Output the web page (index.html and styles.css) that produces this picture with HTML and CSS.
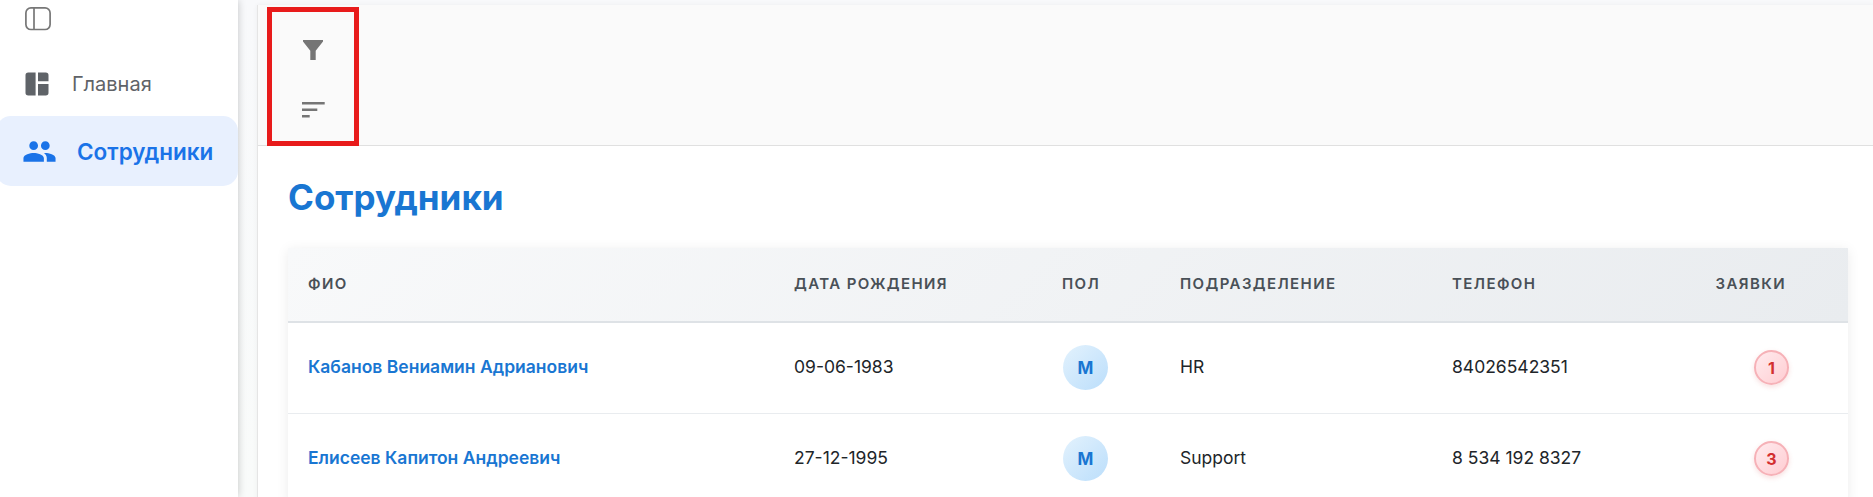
FILE: index.html
```html
<!DOCTYPE html>
<html lang="ru">
<head>
<meta charset="utf-8">
<title>Сотрудники</title>
<link rel="stylesheet" href="styles.css">
</head>
<body>
<div class="app">
  <aside class="sidebar">
    <button class="toggle" aria-label="Меню">
      <svg width="26" height="24" viewBox="0 0 26 24" fill="none" stroke="#777"><rect x=".9" y=".9" width="24.2" height="21.6" rx="5" stroke-width="1.7"/><path d="M9 1v21.5" stroke-width="1.7"/></svg>
    </button>
    <nav class="nav">
      <a class="nav-item">
        <svg class="home-icon" width="24" height="24" viewBox="0 0 24 24" fill="#5f6368"><path d="M3.2.5H10.6V23.5H3.2A2.7 2.7 0 0 1 .5 20.800V3.200A2.700 2.700 0 0 1 3.200.5ZM13 .5h7.800a2.700 2.700 0 0 1 2.700 2.700V9.200H13ZM13 12h10.500v8.800a2.700 2.700 0 0 1-2.700 2.700H13Z"/></svg>
        <span>Главная</span>
      </a>
      <a class="nav-item active">
        <svg class="people-icon" width="35" height="35" viewBox="0 0 24 24" fill="#1a73e8"><path d="M16 11c1.660 0 2.990-1.340 2.990-3S17.660 5 16 5s-3 1.340-3 3 1.340 3 3 3zm-8 0c1.660 0 2.990-1.340 2.990-3S9.660 5 8 5 5 6.340 5 8s1.340 3 3 3zm0 2c-2.330 0-7 1.170-7 3.500V19h14v-2.500c0-2.330-4.670-3.500-7-3.500zm8 0c-.290 0-.620.020-.970.050 1.160.840 1.970 1.970 1.970 3.450V19h6v-2.500c0-2.330-4.670-3.500-7-3.500z"/></svg>
        <span>Сотрудники</span>
      </a>
    </nav>
  </aside>
  <main class="main">
    <section class="panel">
      <div class="toolbar">
        <div class="tools">
          <svg width="20" height="20" viewBox="0 0 20 20" fill="#757575"><path d="M0 0H20V1.500L12.700 10.700V20H7.300V10.700L0 1.500Z"/></svg>
          <svg width="23" height="16" viewBox="0 0 23 16" fill="#757575"><path d="M0 0h22.700v2.500H0zM0 6.500h15.300v2.500H0zM0 13h7.700v2.500H0z"/></svg>
        </div>
      </div>
      <div class="content">
        <h1 class="title">Сотрудники</h1>
        <div class="table">
          <div class="row head"><span>ФИО</span><span>ДАТА РОЖДЕНИЯ</span><span>ПОЛ</span><span>ПОДРАЗДЕЛЕНИЕ</span><span>ТЕЛЕФОН</span><span class="requests">ЗАЯВКИ</span></div>
          <div class="row"><a class="name text">Кабанов Вениамин Адрианович</a><span class="text">09-06-1983</span><span><b class="gender">М</b></span><span class="text">HR</span><span class="text">84026542351</span><span class="requests"><b class="count">1</b></span></div>
          <div class="row"><a class="name text">Елисеев Капитон Андреевич</a><span class="text">27-12-1995</span><span><b class="gender">М</b></span><span class="text">Support</span><span class="text">8 534 192 8327</span><span class="requests"><b class="count">3</b></span></div>
        </div>
      </div>
    </section>
  </main>
</div>
</body>
</html>
```
FILE: styles.css
```css
* { box-sizing: border-box; }
body { margin: 0; font-family: Inter, sans-serif; color: #212529; background: #f8f9fa; }
.app { display: flex; height: 497px; overflow: hidden; }
.sidebar { flex: 0 0 238px; background: #fff; box-shadow: 0 0 8px rgba(0,0,0,.22); padding-top: 7px; z-index: 1; }
.toggle { display: block; margin: 0 0 0 25px; padding: 0; border: 0; background: none; height: 24px; }
.toggle svg, .nav-item svg { display: block; }
.nav { display: flex; flex-direction: column; margin-top: 21px; }
.nav-item { display: flex; align-items: center; height: 64px; padding-left: 25px; font-size: 20px; color: #5f6368; }
.home-icon { margin-right: 23px; }
.nav-item.active { height: 70px; margin-left: -4px; padding-left: 26px; border-radius: 15px; background: #e8f0fe; color: #1a73e8; font-size: 22.5px; font-weight: 600; }
.active span { padding-top: 1px; }
.people-icon { margin-right: 20px; }
.main { flex: 1; min-width: 0; padding: 5px 0 0 19px; background: linear-gradient(#f8f9fb, #f9fbfa); }
.panel { height: 520px; border-left: 1px solid #e5e5e5; background: #fff; box-shadow: 0 0 5px rgba(0,0,0,.05); }
.toolbar { height: 141px; border-bottom: 1px solid #e0e0e0; background: #fafafa; padding: 2px 0 0 9px; }
.tools { display: flex; flex-direction: column; align-items: center; gap: 42px; width: 92px; height: 139px; border: 5px solid #e81b1b; padding-top: 28px; }
.tools svg { flex: none; }
.content { padding: 30px 25px 0 30px; }
.title { margin: 0; height: 72px; font-size: 35px; line-height: 42px; font-weight: 700; color: #1976d2; }
.table { background: #fff; box-shadow: 0 2px 12px rgba(0,0,0,.08); }
.row { display: grid; grid-template-columns: 486px 268px 118px 272px 216px 1fr; align-items: center; height: 91px; padding-bottom: 1px; border-bottom: 1px solid #e9ecef; font-size: 17.5px; }
.row > * { padding-left: 20px; white-space: nowrap; }
.row .text { padding-bottom: 2px; }
.head { height: 75px; padding-bottom: 2px; border-bottom: 2px solid #dee2e6; background: linear-gradient(135deg, #f8f9fa, #e9ecef); color: #495057; font-size: 15px; font-weight: 600; letter-spacing: 1.4px; }
.name { color: #1976d2; font-weight: 600; }
.requests { display: flex; justify-content: flex-end; padding-right: 59px; }
.head .requests { padding-right: 62px; }
.gender { display: flex; align-items: center; justify-content: center; width: 45px; height: 45px; margin-left: 1px; border-radius: 50%; background: linear-gradient(135deg, #e3f2fd, #bbdefb); color: #1976d2; font-size: 17px; font-weight: 700; }
.count { display: flex; align-items: center; justify-content: center; width: 35px; height: 35px; border-radius: 50%; border: 2px solid #f6b1b7; background: linear-gradient(135deg, #ffebee, #ffcdd2); color: #d32f2f; font-size: 16px; font-weight: 700; box-shadow: 0 2px 5px rgba(211,47,47,.15); }
```
